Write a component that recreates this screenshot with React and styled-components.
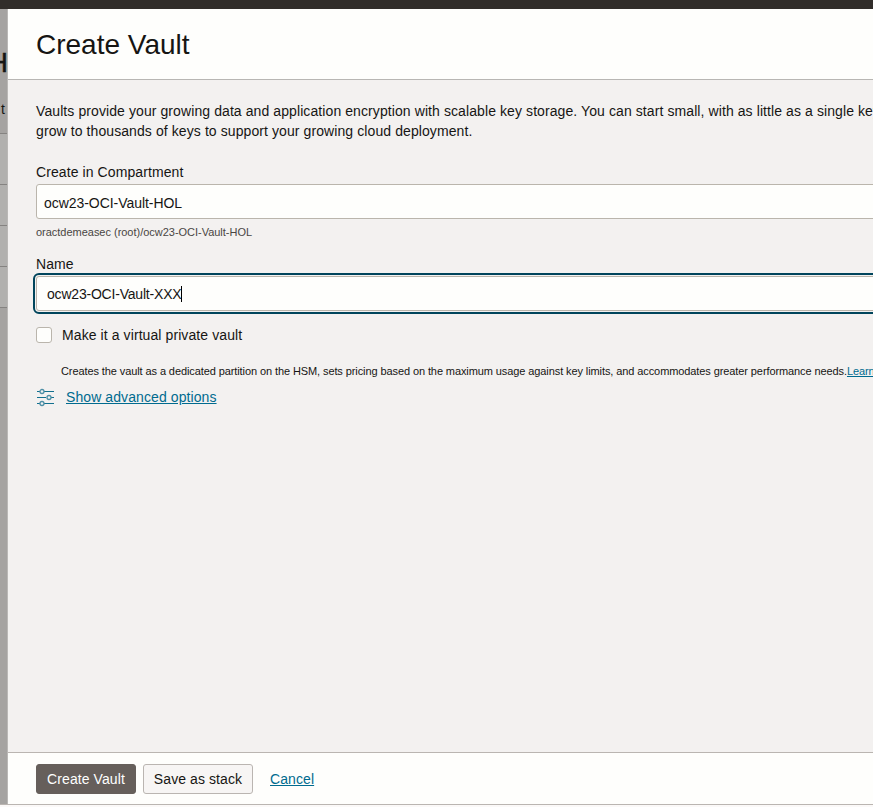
import React from "react";
import styled, { createGlobalStyle } from "styled-components";

const GlobalStyle = createGlobalStyle`
  * { box-sizing: border-box; }
  body {
    margin: 0;
    overflow: hidden;
    background: #fbf9f8;
    color: #161513;
    font: 14px/20px "Liberation Sans", Arial, sans-serif;
    letter-spacing: 0.09px;
  }
`;

const Page = styled.div`
  display: flex;
  flex-direction: column;
  width: 873px;
  height: 807px;
  overflow: hidden;
`;

const TopBar = styled.div`
  flex: 0 0 9px;
  background: #312d2a;
`;

const Main = styled.div`
  display: flex;
  flex: 0 0 796px;
  border-bottom: 1px solid #bab5b1;
`;

const Backdrop = styled.aside`
  flex: 0 0 7px;
  display: flex;
  flex-direction: column;
  overflow: hidden;
  background: #a5a3a1;
`;

const BackdropHead = styled.div`
  flex: 0 0 125px;
  display: flex;
  flex-direction: column;
  align-items: flex-end;
  padding: 38px 0 0;
  border-bottom: 1px solid #858381;
`;

const BackdropTitle = styled.span`
  margin-right: -1px;
  font-size: 28px;
  line-height: 32px;
  -webkit-text-stroke: 0.4px #161513;
`;

const BackdropTab = styled.span`
  margin: 20px 2px 0 0;
`;

const BackdropRow = styled.div`
  flex: 0 0 ${(p) => p.$height}px;
  background: #b1b0ae;
  border-bottom: 1px solid #858381;
`;

const Drawer = styled.section`
  flex: 1;
  min-width: 0;
  display: flex;
  flex-direction: column;
  border-left: 1px solid #bab8b6;
  background: #f3f1f0;
  white-space: nowrap;
`;

const Header = styled.header`
  flex: 0 0 71px;
  padding: 18px 28px 0;
  background: #fefefc;
  border-bottom: 1px solid #b8b6b3;
`;

const Title = styled.h1`
  margin: 0;
  font-size: 28px;
  font-weight: 400;
  line-height: 36px;
  letter-spacing: 0;
`;

const Content = styled.div`
  flex: 1;
  padding: 21px 0 0 28px;
  overflow: hidden;
`;

const Intro = styled.p`
  margin: 0 0 21px;
`;

const Label = styled.label`
  display: block;
  height: 22px;
`;

const Field = styled.div`
  display: flex;
  align-items: center;
  width: 900px;
  height: 35px;
  padding: ${(p) => (p.$focused ? "0 10px" : "2px 7px 0")};
  border: 1px solid #bab5ac;
  border-radius: 3px;
  background: #fefefc;
  letter-spacing: ${(p) => (p.$focused ? -0.2 : -0.05)}px;
  outline: ${(p) => (p.$focused ? "2px solid #00455c" : "none")};
  outline-offset: 1px;
`;

const Caret = styled.span`
  width: 1px;
  height: 16px;
  background: #000;
`;

const Hint = styled.div`
  margin: 5px 0 14px;
  height: 16px;
  font-size: 11px;
  line-height: 16px;
  letter-spacing: -0.02px;
  color: #494643;
`;

const CheckRow = styled.div`
  display: flex;
  align-items: center;
  gap: 10px;
  height: 20px;
  margin-top: 14px;
`;

const Checkbox = styled.span`
  width: 16px;
  height: 16px;
  border: 1px solid #bab5ac;
  border-radius: 3px;
  background: #fefefc;
`;

const Note = styled.div`
  margin: 18px 0 8px 25px;
  height: 16px;
  font-size: 11px;
  line-height: 16px;
  letter-spacing: -0.095px;
`;

const Link = styled.a`
  color: #006b8f;
  text-decoration: underline;
`;

const Advanced = styled.div`
  display: flex;
  align-items: center;
  gap: 11px;
  height: 20px;
`;

const Footer = styled.footer`
  flex: 0 0 52px;
  display: flex;
  align-items: flex-start;
  padding: 11px 28px 0;
  background: #fefefc;
  border-top: 1px solid #bab5b1;
`;

const Button = styled.button`
  width: ${(p) => p.$width}px;
  height: 30px;
  padding: 0;
  margin-right: 7px;
  font: inherit;
  letter-spacing: inherit;
  color: ${(p) => (p.$primary ? "#fff" : "#161513")};
  background: ${(p) => (p.$primary ? "#665f5b" : "#f7f5f4")};
  border: 1px solid ${(p) => (p.$primary ? "#665f5b" : "#bab5b1")};
  border-radius: 3px;
`;

const CancelLink = styled(Link)`
  margin: 5px 0 0 10px;
`;

const SlidersIcon = () => (
  <svg width="19" height="20" viewBox="0 0 19 20" fill="none" stroke="#12708f" strokeWidth="1">
    <path d="M1 4.5h3M8 4.5h10M1 10.5h9M15 10.5h3M1 16.5h3M8 16.5h10" />
    <g stroke="#4d8fa6" strokeWidth="1.3">
      <circle cx="6" cy="4.5" r="2" />
      <circle cx="13" cy="10.5" r="2" />
      <circle cx="6" cy="16.5" r="2" />
    </g>
  </svg>
);

export default function App() {
  return (
    <Page>
      <GlobalStyle />
      <TopBar />
      <Main>
        <Backdrop>
          <BackdropHead>
            <BackdropTitle>H</BackdropTitle>
            <BackdropTab>t</BackdropTab>
          </BackdropHead>
          <BackdropRow $height={51} />
          <BackdropRow $height={41} />
          <BackdropRow $height={41} />
          <BackdropRow $height={41} />
        </Backdrop>
        <Drawer>
          <Header>
            <Title>Create Vault</Title>
          </Header>
          <Content>
            <Intro>
              Vaults provide your growing data and application encryption with scalable key storage. You can start small, with as little as a single key and
              <br />
              grow to thousands of keys to support your growing cloud deployment.
            </Intro>
            <Label>Create in Compartment</Label>
            <Field>ocw23-OCI-Vault-HOL</Field>
            <Hint>oractdemeasec (root)/ocw23-OCI-Vault-HOL</Hint>
            <Label>Name</Label>
            <Field $focused>
              ocw23-OCI-Vault-XXX
              <Caret />
            </Field>
            <CheckRow>
              <Checkbox />
              Make it a virtual private vault
            </CheckRow>
            <Note>
              Creates the vault as a dedicated partition on the HSM, sets pricing based on the maximum usage against key limits, and accommodates greater performance needs.
              <Link>Learn more</Link>
            </Note>
            <Advanced>
              <SlidersIcon />
              <Link>Show advanced options</Link>
            </Advanced>
          </Content>
          <Footer>
            <Button $primary $width={100}>Create Vault</Button>
            <Button $width={110}>Save as stack</Button>
            <CancelLink>Cancel</CancelLink>
          </Footer>
        </Drawer>
      </Main>
    </Page>
  );
}
